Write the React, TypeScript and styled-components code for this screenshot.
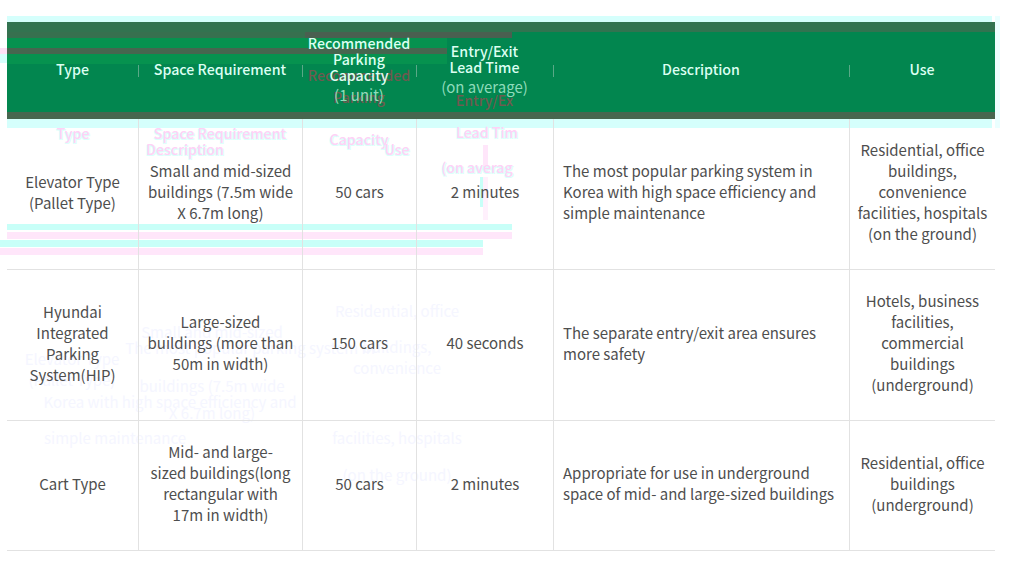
import { createGlobalStyle, styled } from "styled-components";

const GlobalStyle = createGlobalStyle`
  html, body {
    margin: 0;
    background: #fff;
  }
  body {
    font-family: "Noto Sans CJK KR", "Noto Sans", sans-serif;
  }
`;

const columns = [131, 164, 114, 137, 296, 146];

const rows = [
  {
    height: 151,
    cells: [
      "Elevator Type\n(Pallet Type)",
      "Small and mid-sized\nbuildings (7.5m wide\nX 6.7m long)",
      "50 cars",
      "2 minutes",
      "The most popular parking system in\nKorea with high space efficiency and\nsimple maintenance",
      "Residential, office\nbuildings,\nconvenience\nfacilities, hospitals\n(on the ground)",
    ],
  },
  {
    height: 151,
    cells: [
      "Hyundai\nIntegrated\nParking\nSystem(HIP)",
      "Large-sized\nbuildings (more than\n50m in width)",
      "150 cars",
      "40 seconds",
      "The separate entry/exit area ensures\nmore safety",
      "Hotels, business\nfacilities,\ncommercial\nbuildings\n(underground)",
    ],
  },
  {
    height: 130,
    cells: [
      "Cart Type",
      "Mid- and large-\nsized buildings(long\nrectangular with\n17m in width)",
      "50 cars",
      "2 minutes",
      "Appropriate for use in underground\nspace of mid- and large-sized buildings",
      "Residential, office\nbuildings\n(underground)",
    ],
  },
];

// left-over image of the table that shows through in the capture
const pinkGhosts = [
  { text: "Type", x: 73, y: 133 },
  { text: "Space Requirement", x: 220, y: 133 },
  { text: "Description", x: 185, y: 149 },
  { text: "Capacity", x: 359, y: 139 },
  { text: "Use", x: 397, y: 149 },
  { text: "Lead Tim", x: 487, y: 132 },
  { text: "(on averag", x: 477, y: 167 },
];

const paleGhosts = [
  { text: "Residential, office", x: 397, y: 311 },
  { text: "Small and mid-sized", x: 212, y: 332 },
  { text: "buildings,", x: 397, y: 347 },
  { text: "The most popular parking system in", x: 250, y: 348 },
  { text: "Elevator Type", x: 72, y: 359 },
  { text: "convenience", x: 397, y: 368 },
  { text: "(Pallet Type)", x: 72, y: 380 },
  { text: "buildings (7.5m wide", x: 212, y: 386 },
  { text: "Korea with high space efficiency and", x: 170, y: 402 },
  { text: "X 6.7m long)", x: 212, y: 413 },
  { text: "simple maintenance", x: 115, y: 438 },
  { text: "facilities, hospitals", x: 397, y: 438 },
  { text: "(on the ground)", x: 397, y: 475 },
];

const bands = [
  { left: 7, top: 224, width: 505, height: 6, color: "#c8fff8" },
  { left: 7, top: 232, width: 505, height: 7, color: "#ffe6fa" },
  { left: 0, top: 240, width: 483, height: 7, color: "#c8fff8" },
  { left: 0, top: 248, width: 483, height: 7, color: "#ffe6fa" },
  { left: 480, top: 177, width: 3, height: 30, color: "#c8fff8" },
  { left: 483, top: 145, width: 5, height: 28, color: "#ffe6fa" },
  { left: 483, top: 177, width: 5, height: 43, color: "#fff0fc" },
  { left: 0, top: 48, width: 7, height: 6, color: "#ffe0f6" },
  { left: 0, top: 54, width: 7, height: 9, color: "#d5fffc" },
  { left: 7, top: 16, width: 985, height: 6, color: "#d5fffc" },
  { left: 7, top: 119, width: 985, height: 9, color: "#d5fffc" },
  { left: 995, top: 16, width: 5, height: 112, color: "#eaffff" },
];

export default function App() {
  return (
    <Page>
      <GlobalStyle />
      <Residue>
        {bands.map((band, i) => (
          <Band
            key={i}
            $left={band.left}
            $top={band.top}
            $width={band.width}
            $height={band.height}
            $color={band.color}
          />
        ))}
        {pinkGhosts.map((ghost) => (
          <PinkGhost key={ghost.text} $x={ghost.x} $y={ghost.y}>
            {ghost.text}
          </PinkGhost>
        ))}
        {paleGhosts.map((ghost) => (
          <PaleGhost key={ghost.text} $x={ghost.x} $y={ghost.y}>
            {ghost.text}
          </PaleGhost>
        ))}
      </Residue>
      <Table>
        <colgroup>
          {columns.map((width, i) => (
            <col key={i} style={{ width }} />
          ))}
        </colgroup>
        <thead>
          <HeadRow>
            <HeadCell>
              <HeadText>Type</HeadText>
            </HeadCell>
            <HeadCell>
              <HeadText>Space Requirement</HeadText>
            </HeadCell>
            <HeadCell>
              <DarkGhost $top={45}>Recommended</DarkGhost>
              <DarkGhost $top={67}>Parking</DarkGhost>
              <StackedText>
                Recommended{"\n"}Parking{"\n"}Capacity
                <Sub>(1 unit)</Sub>
              </StackedText>
            </HeadCell>
            <HeadCell>
              <DarkGhost $top={70}>Entry/Ex</DarkGhost>
              <StackedText>
                Entry/Exit{"\n"}Lead Time
                <Sub>(on average)</Sub>
              </StackedText>
            </HeadCell>
            <HeadCell>
              <HeadText>Description</HeadText>
            </HeadCell>
            <HeadCell>
              <HeadText>Use</HeadText>
            </HeadCell>
          </HeadRow>
        </thead>
        <tbody>
          {rows.map((row, i) => (
            <Row key={i} $height={row.height}>
              {row.cells.map((cell, j) => (
                <Cell key={j} $left={j === 4}>
                  {cell}
                </Cell>
              ))}
            </Row>
          ))}
        </tbody>
      </Table>
    </Page>
  );
}

const Page = styled.div`
  position: relative;
  height: 571px;
  overflow: hidden;
  box-sizing: border-box;
  padding: 22px 0 0 7px;
`;

const Residue = styled.div`
  position: absolute;
  inset: 0;
`;

const Band = styled.div<{ $left: number; $top: number; $width: number; $height: number; $color: string }>`
  position: absolute;
  left: ${(p) => p.$left}px;
  top: ${(p) => p.$top}px;
  width: ${(p) => p.$width}px;
  height: ${(p) => p.$height}px;
  background: ${(p) => p.$color};
`;

const Ghost = styled.span<{ $x: number; $y: number }>`
  position: absolute;
  left: ${(p) => p.$x}px;
  top: ${(p) => p.$y}px;
  transform: translate(-50%, -50%);
  font-size: 15px;
  line-height: 16px;
  white-space: nowrap;
`;

const PinkGhost = styled(Ghost)`
  color: #ffd2f6;
  font-weight: 500;
  font-size: 14.2px;
  text-shadow: 1px 1px 0 #dcfffb, -1px 1px 0 #dcfffb;
`;

const PaleGhost = styled(Ghost)`
  color: #f5f6ff;
`;

const Table = styled.table`
  position: relative;
  width: 988px;
  table-layout: fixed;
  border-collapse: separate;
  border-spacing: 0;
  font-size: 15px;
  line-height: 21px;
`;

const HeadRow = styled.tr`
  height: 97px;
  background:
    linear-gradient(#47664f, #47664f) 0 100% / 100% 7px no-repeat,
    linear-gradient(#327350, #327350) 0 0 / 100% 10px no-repeat,
    linear-gradient(#37704f, #37704f) 0 10px / 298px 6px no-repeat,
    linear-gradient(#4a5f50, #4a5f50) 298px 10px / 207px 6px no-repeat,
    linear-gradient(#46664f, #46664f) 0 26px / 440px 6px no-repeat,
    linear-gradient(#06924f, #06924f) 0 16px / 440px 26px no-repeat,
    #02864f;
`;

const HeadCell = styled.th`
  position: relative;
  padding: 0 0 3px;
  color: #dcfff2;
  font-size: 14.2px;
  font-weight: 500;
  line-height: 16px;
  text-align: center;
  white-space: pre-line;

  &:not(:first-child)::before {
    content: "";
    position: absolute;
    left: 0;
    top: 43px;
    width: 1px;
    height: 12px;
    background: #5aa987;
  }
`;

const HeadText = styled.span`
  position: relative;
  display: block;
`;

const StackedText = styled(HeadText)`
  padding-top: 2px;
`;

const DarkGhost = styled.span<{ $top: number }>`
  position: absolute;
  left: 0;
  right: 0;
  top: ${(p) => p.$top}px;
  color: #6f5a50;
  white-space: nowrap;
`;

const Sub = styled.span`
  display: block;
  margin-top: 1px;
  color: #8fdcbb;
  font-size: 15px;
  font-weight: 400;
  line-height: 21px;
`;

const Row = styled.tr<{ $height: number }>`
  height: ${(p) => p.$height}px;
`;

const Cell = styled.td<{ $left: boolean }>`
  padding: 0 0 5px ${(p) => (p.$left ? "9px" : "0")};
  color: #4e4e4e;
  text-align: ${(p) => (p.$left ? "left" : "center")};
  white-space: pre-line;
  border-left: 1px solid #e2e2e2;
  border-bottom: 1px solid #e2e2e2;

  &:first-child {
    border-left: none;
  }
`;
